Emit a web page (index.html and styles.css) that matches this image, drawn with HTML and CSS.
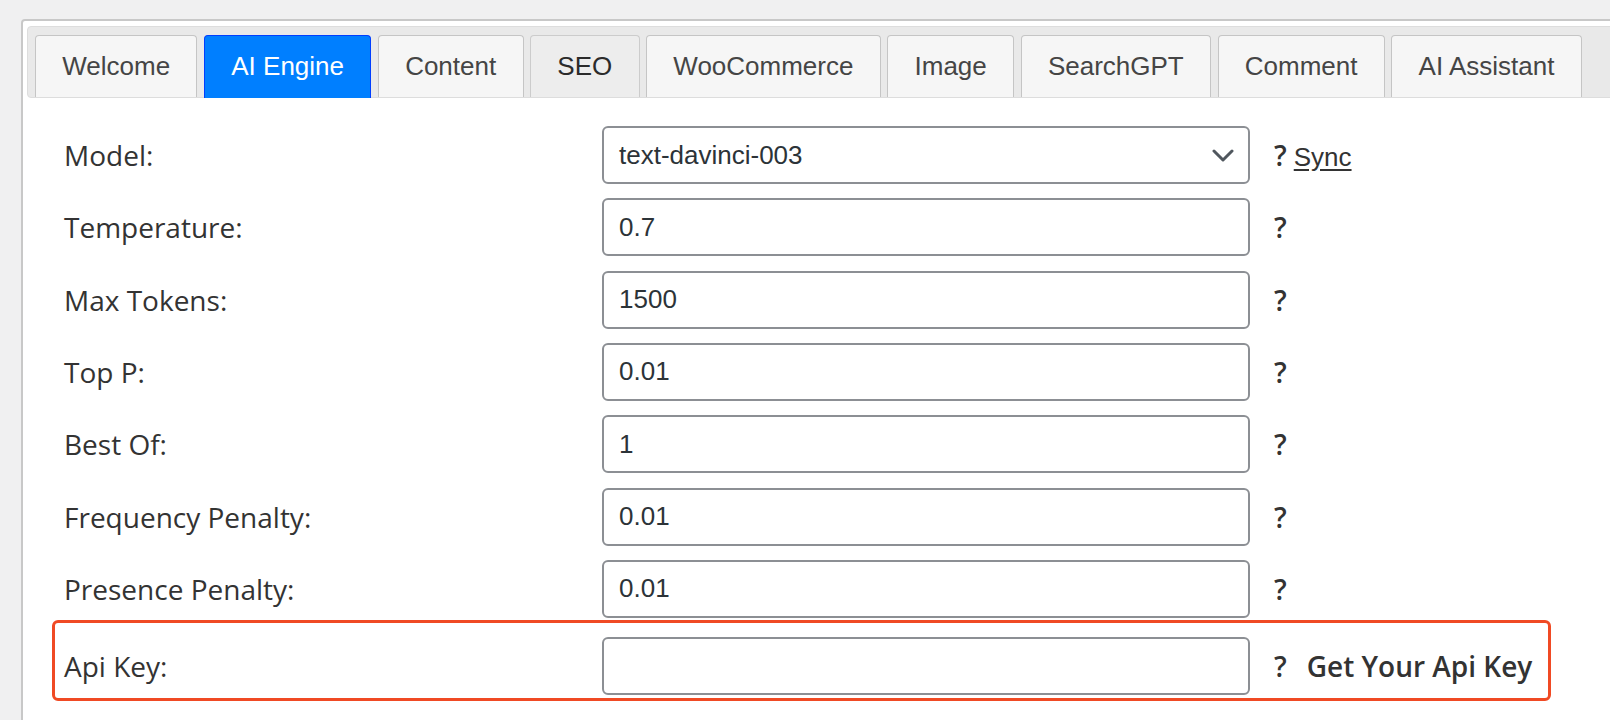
FILE: index.html
```html
<!DOCTYPE html>
<html lang="en">
<head>
<meta charset="utf-8">
<title>AI Engine Settings</title>
<link rel="stylesheet" href="styles.css">
</head>
<body>
<div class="page">
  <div class="panel">
    <ul class="tabs">
      <li class="tab">Welcome</li>
      <li class="tab active">AI Engine</li>
      <li class="tab">Content</li>
      <li class="tab hover">SEO</li>
      <li class="tab">WooCommerce</li>
      <li class="tab">Image</li>
      <li class="tab">SearchGPT</li>
      <li class="tab">Comment</li>
      <li class="tab">AI Assistant</li>
    </ul>
    <div class="form">
      <div class="row">
        <label class="label">Model:</label>
        <div class="select">
          <span class="select-value">text-davinci-003</span>
          <svg class="chevron" width="22" height="13" viewBox="0 0 22 13"><path d="M2 2 L11 11 L20 2" fill="none" stroke="#50575e" stroke-width="3" stroke-linecap="round" stroke-linejoin="round"/></svg>
        </div>
        <div class="help"><span class="q">?</span> <a class="sync" href="#">Sync</a></div>
      </div>
      <div class="row">
        <label class="label">Temperature:</label>
        <input class="input" type="text" value="0.7">
        <div class="help"><span class="q">?</span></div>
      </div>
      <div class="row">
        <label class="label">Max Tokens:</label>
        <input class="input" type="text" value="1500">
        <div class="help"><span class="q">?</span></div>
      </div>
      <div class="row">
        <label class="label">Top P:</label>
        <input class="input" type="text" value="0.01">
        <div class="help"><span class="q">?</span></div>
      </div>
      <div class="row">
        <label class="label">Best Of:</label>
        <input class="input" type="text" value="1">
        <div class="help"><span class="q">?</span></div>
      </div>
      <div class="row">
        <label class="label">Frequency Penalty:</label>
        <input class="input" type="text" value="0.01">
        <div class="help"><span class="q">?</span></div>
      </div>
      <div class="row">
        <label class="label">Presence Penalty:</label>
        <input class="input" type="text" value="0.01">
        <div class="help"><span class="q">?</span></div>
      </div>
      <div class="row highlight">
        <label class="label">Api Key:</label>
        <input class="input" type="text" value="">
        <div class="help"><span class="q">?</span><span class="getkey">Get Your Api Key</span></div>
      </div>
    </div>
  </div>
</div>
</body>
</html>
```
FILE: styles.css
```css
html, body {
  margin: 0;
  padding: 0;
  background: #f0f0f1;
  overflow: hidden;
  width: 1610px;
  height: 720px;
}
.page {
  padding: 19px 0 0 21px;
}
.panel {
  width: 1660px;
  height: 701px;
  box-sizing: border-box;
  background: #fff;
  border: 2px solid #c8c8c8;
  border-bottom: 0;
  border-radius: 4px 4px 0 0;
  padding: 5px 4px 0;
}
.tabs {
  list-style: none;
  margin: 0;
  padding: 8px 7px 0;
  display: flex;
  gap: 6.5px;
  background: #e9e9e9;
  border: 1px solid #dddddd;
  border-radius: 4px;
}
.tab {
  font-family: "Liberation Sans", Arial, sans-serif;
  font-size: 26px;
  line-height: 60px;
  padding: 0 26.3px 1px;
  color: #454545;
  background: #f6f6f6;
  border: 1px solid #c5c5c5;
  border-bottom: 0;
  border-radius: 4px 4px 0 0;
  white-space: nowrap;
}
.tab.active {
  background: #007fff;
  border-color: #003eff;
  color: #fff;
  margin-bottom: -1px;
  padding-bottom: 2px;
}
.tab.hover {
  background: #ededed;
  border-color: #cccccc;
  color: #2b2b2b;
}
.form {
  padding: 28px 0 0 37px;
}
.row {
  display: grid;
  grid-template-columns: 538px 648px auto;
  align-items: center;
  height: 58px;
}
.row + .row {
  margin-top: 14.33px;
}
.row.highlight {
  margin-top: 2px;
  margin-left: -12px;
  width: 1499px;
  height: auto;
  box-sizing: border-box;
  border: 3px solid #f04a24;
  border-radius: 6px;
  padding: 14px 0 3px 9px;
}
.label {
  font-family: "Open Sans", "Noto Sans", sans-serif;
  font-size: 28px;
  color: #333;
}
.input, .select {
  box-sizing: border-box;
  width: 648px;
  height: 58px;
  border: 2px solid #8c8f94;
  border-radius: 6px;
  background: #fff;
  padding: 0 15px;
  font-family: "Liberation Sans", Arial, sans-serif;
  font-size: 26px;
  color: #2c3338;
  margin: 0;
  outline: none;
}
.select {
  display: flex;
  align-items: center;
  justify-content: space-between;
  padding-right: 14px;
}
.chevron {
  display: block;
}
.help {
  padding-left: 24px;
  font-family: "Open Sans", "Noto Sans", sans-serif;
  font-size: 28px;
  color: #333;
  white-space: nowrap;
  display: flex;
  align-items: baseline;
}
.q {
  font-weight: 600;
  margin-right: 7px;
}
.sync {
  font-family: "Liberation Sans", Arial, sans-serif;
  font-size: 26px;
  color: #333;
  text-decoration: underline;
  text-underline-offset: 3px;
}
.getkey {
  font-weight: 600;
  margin-left: 13px;
}
```
